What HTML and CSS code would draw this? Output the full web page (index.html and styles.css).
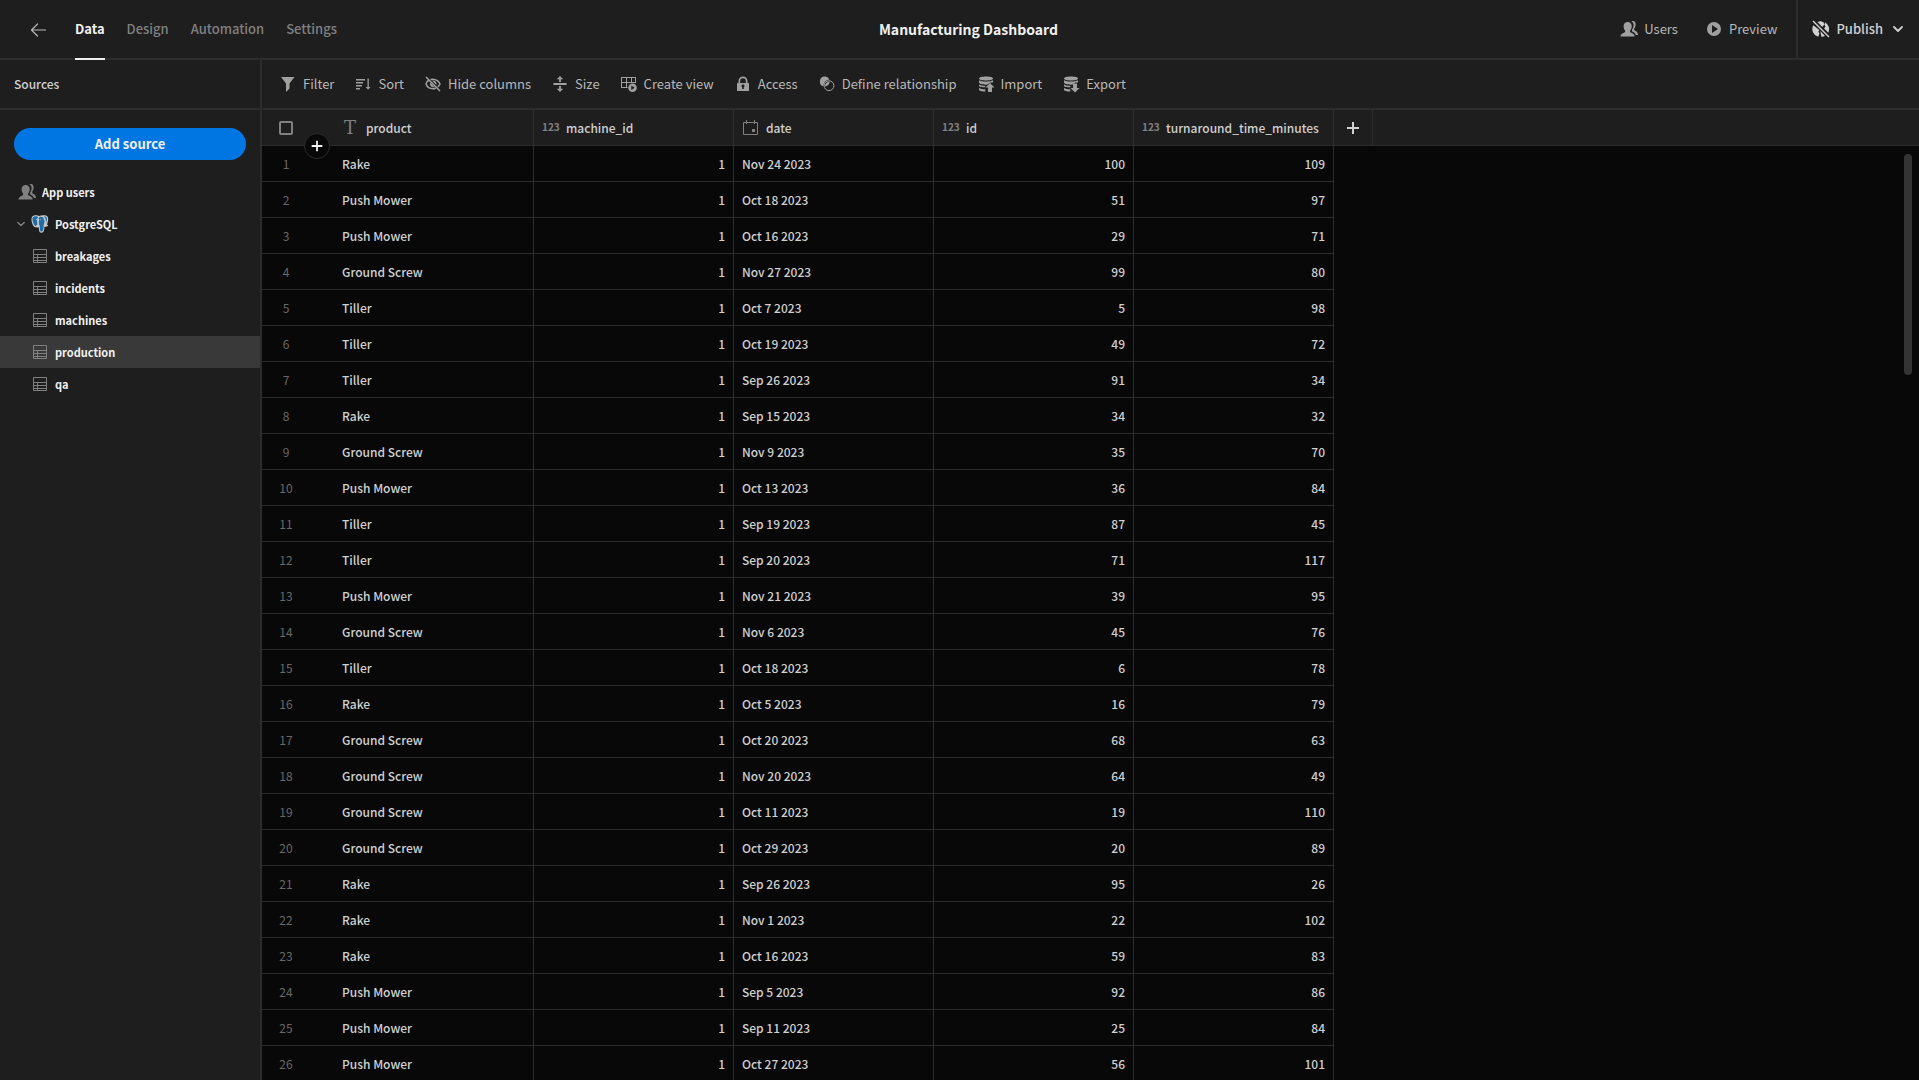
FILE: index.html
```html
<!DOCTYPE html>
<html lang="en">
<head>
<meta charset="utf-8">
<meta name="viewport" content="width=device-width, initial-scale=1">
<title>Manufacturing Dashboard</title>
<link rel="stylesheet" href="styles.css">
</head>
<body>
<svg class="sprite" aria-hidden="true">
  <symbol id="i-users" viewBox="0 0 18 18"><path d="M11.2 1.6c.6-.5 1.200-.7 1.900-.6 1.700.1 2.600 1.500 2.500 3.500 0 1.700-.5 3-1.400 4v1.400c.3.800 3.600 1.400 3.700 4.200v1h-2.100c-.5-2.500-2.800-3.200-3.900-3.800v-1.500c1.200-1.400 1.700-3.200 1.700-5 0-1.300-.9-2.600-2.400-3.200z"/><path d="M7.700 2c2.600 0 4 1.700 4 4.200 0 1.700-.7 3.300-1.600 4.300v1.500c.4.900 4.500 1.200 4.600 4.600H.500c.1-3.400 4.200-3.700 4.600-4.600v-1.500c-.9-1-1.500-2.600-1.500-4.300C3.600 3.700 5.100 2 7.700 2z"/></symbol>
  <symbol id="i-table" viewBox="0 0 18 18"><path fill="none" stroke="currentColor" d="M2.500 2.500h13v13h-13zM2.500 7.500h13M2.500 10.500h13M2.500 13.500h13M6.500 7.500v8"/></symbol>
  <symbol id="i-chevron" viewBox="0 0 10 10"><path fill="none" stroke="currentColor" stroke-width="1.800" stroke-linecap="round" stroke-linejoin="round" d="M1 3l4 4 4-4"/></symbol>
  <symbol id="i-plus" viewBox="0 0 18 18"><path d="M8 3h2v5h5v2h-5v5H8v-5H3V8h5z"/></symbol>
  <symbol id="i-db" viewBox="0 0 18 18"><path d="M9 1.500c4 0 7 .8 7 2s-3 2-7 2-7-.8-7-2 3-2 7-2z"/><path d="M2 5.200c1.500.9 4 1.300 7 1.300s5.500-.4 7-1.300V7.500h-2.500L10.500 9.600 9 9.700c-4 0-7-.9-7-2.100zM2 9.400c1.400.9 3.800 1.300 6.300 1.300v1.600c-3.600-.1-6.300-.3-6.300-1.300z"/><path d="M2 12.900c1.400.8 3.600 1.200 6.300 1.300v2.300C4.700 16.400 2 15.900 2 14.700z"/></symbol>
</svg>
<div class="app">
  <header class="topbar">
    <nav class="tabs">
      <button class="back" aria-label="Back"><svg class="icon" viewBox="0 0 18 18"><path fill="none" stroke="currentColor" stroke-width="1.200" stroke-linecap="round" stroke-linejoin="round" d="M15.500 9H1.500M7.500 3L1.500 9l6 6"/></svg></button>
      <a class="tab active" href="#">Data</a>
      <a class="tab" href="#">Design</a>
      <a class="tab" href="#">Automation</a>
      <a class="tab" href="#">Settings</a>
    </nav>
    <h1 class="title">Manufacturing Dashboard</h1>
    <div class="actions">
      <button class="action"><svg class="icon"><use href="#i-users"/></svg>Users</button>
      <button class="action"><svg class="icon" viewBox="0 0 18 18"><path fill-rule="evenodd" d="M9 2a7 7 0 1 1 0 14A7 7 0 0 1 9 2zM7 5v8l6-4z"/></svg>Preview</button>
      <button class="action publish"><svg class="icon" viewBox="0 0 18 18"><path d="M5.500 1.900A8 8 0 0 1 9 1.200l2.500 1 .8 2.300-2 2.400zM13 2.300a8 8 0 0 1 3.300 10.400l-4.200-4.200 1.400-2-1-1.500zM1.300 5.200a8 8 0 0 0 4.900 11.500l1.200-2.900-1-2.300 1-1.400zM8.200 11l4.800 4.900-3.300 1-.6-1.600z"/><path fill="none" stroke="currentColor" stroke-width="1.500" d="M1 1l16 16"/></svg>Publish<svg class="chevron"><use href="#i-chevron"/></svg></button>
    </div>
  </header>
  <div class="workspace">
    <aside class="sidebar">
      <h2 class="side-title">Sources</h2>
      <button class="add-source">Add source</button>
      <ul class="tree">
        <li><a class="node root" href="#"><svg class="icon"><use href="#i-users"/></svg>App users</a></li>
        <li><a class="node source" href="#"><svg class="chevron"><use href="#i-chevron"/></svg><svg class="icon" viewBox="0 0 18 18"><path fill="#c9c9c9" d="M3 .6C5 0 7 .5 8 1c2-1 5-.9 7-.4 3 1.200 2.500 5 1 8.900l1.200.8c-.8 1.500-2.700 1.700-3.700 1.400-.3 2.500-.2 6-3.200 6-2.500 0-2.300-3.400-2.500-5.500-1 .6-2.200.5-2.800-.2-1.800 1-3.400-1.700-4.200-5C.200 3.800.400 1.400 3 .6z"/><path fill="#1f6da8" d="M3.300 1.500c1.500-.4 3 0 3.800.6-1.300 1.900-1.100 5-.7 7.400-.8.400-1 1.400-1.700 1.500C3.400 11.200 2.200 8.400 1.700 6 1.200 3.700 1.400 2.100 3.300 1.500zM8.300 2.200c1.300-.8 4.200-.4 4.900 2.200.5 2 .3 4-.7 5.800.2 2.800 0 6.300-2.100 6.300-2 0-1.400-3.500-1.700-6.100C6.900 8.600 7 4 8.300 2.200zM12.700 1.500c3.600-.3 4.100 2.200 2.200 6.500.3-2.600 0-4.800-2.200-6.500z"/><path fill="none" stroke="#c9c9c9" stroke-width=".9" d="M5 4.500l2.500-.4v6.400M12.600 4.200h1.600M8.600 4.800h1.200"/></svg>PostgreSQL</a></li>
        <li><a class="node" href="#"><svg class="icon"><use href="#i-table"/></svg>breakages</a></li>
        <li><a class="node" href="#"><svg class="icon"><use href="#i-table"/></svg>incidents</a></li>
        <li><a class="node" href="#"><svg class="icon"><use href="#i-table"/></svg>machines</a></li>
        <li><a class="node selected" href="#"><svg class="icon"><use href="#i-table"/></svg>production</a></li>
        <li><a class="node" href="#"><svg class="icon"><use href="#i-table"/></svg>qa</a></li>
      </ul>
    </aside>
    <main class="main">
      <div class="toolbar">
        <button class="action"><svg class="icon" viewBox="0 0 18 18"><path d="M2 2h13.500l-5 6.500v5L7 17V8.500z"/></svg>Filter</button>
        <button class="action"><svg class="icon" viewBox="0 0 18 18"><path d="M2 4h9v1.500H2zM2 7h7v1.500H2zM2 10h6v1.500H2zM2 13h4v1.500H2zM13.500 3.500h1.300V12h1.700l-2.400 2.800L11.700 12h1.800z"/></svg>Sort</button>
        <button class="action"><svg class="icon" viewBox="0 0 18 18"><path fill="none" stroke="currentColor" stroke-width="1.500" d="M2 2l14 14M5 5C3 6.200 2 8 2 9c1 2.700 4 4.700 7 4.700 1.200 0 2-.2 2.800-.5M6.500 4.500C7.200 4.300 8 4.200 9 4.200c3 0 6.200 2.300 7 4.800-.4 1-1.200 2.200-2.300 3"/><path d="M6 7.600A3.500 3.500 0 0 0 10.600 12zM8 5.600A3.500 3.500 0 0 1 12.400 10z"/></svg>Hide columns</button>
        <button class="action"><svg class="icon" viewBox="0 0 18 18"><path d="M2.500 8h13v2h-13zM9 1l3.200 3.200H9.900V7H8.100V4.200H5.800zM9 17l-3.200-3.200h2.300V11h1.800v2.800h2.300z"/></svg>Size</button>
        <button class="action"><svg class="icon" viewBox="0 0 18 18"><path fill="none" stroke="currentColor" d="M1.500 2.500h14M1.500 7.500h14M1.500 12.500h6M1.500 2v11M6.500 2v11M11.500 2v5.500M15.500 2v6"/><path fill-rule="evenodd" d="M12.500 8.500a4.300 4.300 0 1 1 0 8.600 4.300 4.300 0 0 1 0-8.600zm-1.200 2v4.600l3.400-2.300z"/></svg>Create view</button>
        <button class="action"><svg class="icon" viewBox="0 0 18 18"><path fill-rule="evenodd" d="M3.500 8h1V6a4.500 4.500 0 0 1 9 0v2h1c.4 0 .5.200.5.500v7c0 .4-.1.500-.5.500h-11c-.4 0-.5-.1-.5-.5v-7c0-.3.100-.5.500-.5zm2.700 0h5.600V6a2.800 2.800 0 0 0-5.600 0zM9 9.500a1.500 1.500 0 0 0-.8 2.800V14h1.600v-1.700A1.500 1.500 0 0 0 9 9.500z"/></svg>Access</button>
        <button class="action"><svg class="icon" viewBox="0 0 18 18"><path d="M6.700 1.500a5 5 0 0 1 4.600 3.100A6.400 6.400 0 0 0 5.500 11.300 5 5 0 0 1 6.700 1.500z"/><path d="M11.700 6.600a5 5 0 0 1-4.900 4.900 5 5 0 0 1 4.900-4.900z"/><circle cx="11" cy="10.700" r="4.900" fill="none" stroke="currentColor" stroke-width="1"/></svg>Define relationship</button>
        <button class="action"><svg class="icon" viewBox="0 0 18 18"><use href="#i-db"/><path d="M13 8l4.500 4.500H15V17h-4v-4.500H8.500z"/></svg>Import</button>
        <button class="action"><svg class="icon" viewBox="0 0 18 18"><use href="#i-db"/><path d="M11 8.500h4V13h2.500L13 17.500 8.500 13H11z"/></svg>Export</button>
      </div>
      <div class="grid">
        <table>
          <colgroup><col class="c-num"><col class="c-data"><col class="c-data"><col class="c-data"><col class="c-data"><col class="c-data"><col class="c-add"><col></colgroup>
          <thead>
            <tr>
              <th class="num"><input type="checkbox" aria-label="Select all rows"></th>
              <th><span class="head"><span class="type letter">T</span>product</span></th>
              <th><span class="head"><span class="type digits">123</span>machine_id</span></th>
              <th><span class="head"><svg class="icon" viewBox="0 0 18 18"><path fill="none" stroke="currentColor" d="M1.500 3.500h14v12h-14z"/><path d="M4 1h1v4H4zM12 1h1v4h-1zM10 10h3v3h-3z"/></svg>date</span></th>
              <th><span class="head"><span class="type digits">123</span>id</span></th>
              <th><span class="head"><span class="type digits">123</span>turnaround_time_minutes</span></th>
              <th class="add"><button class="add-column" aria-label="Add column"><svg class="icon"><use href="#i-plus"/></svg></button></th>
              <th class="rest"></th>
            </tr>
          </thead>
          <tbody>
            <tr><td>1</td><td>Rake</td><td>1</td><td>Nov 24 2023</td><td>100</td><td>109</td></tr>
            <tr><td>2</td><td>Push Mower</td><td>1</td><td>Oct 18 2023</td><td>51</td><td>97</td></tr>
            <tr><td>3</td><td>Push Mower</td><td>1</td><td>Oct 16 2023</td><td>29</td><td>71</td></tr>
            <tr><td>4</td><td>Ground Screw</td><td>1</td><td>Nov 27 2023</td><td>99</td><td>80</td></tr>
            <tr><td>5</td><td>Tiller</td><td>1</td><td>Oct 7 2023</td><td>5</td><td>98</td></tr>
            <tr><td>6</td><td>Tiller</td><td>1</td><td>Oct 19 2023</td><td>49</td><td>72</td></tr>
            <tr><td>7</td><td>Tiller</td><td>1</td><td>Sep 26 2023</td><td>91</td><td>34</td></tr>
            <tr><td>8</td><td>Rake</td><td>1</td><td>Sep 15 2023</td><td>34</td><td>32</td></tr>
            <tr><td>9</td><td>Ground Screw</td><td>1</td><td>Nov 9 2023</td><td>35</td><td>70</td></tr>
            <tr><td>10</td><td>Push Mower</td><td>1</td><td>Oct 13 2023</td><td>36</td><td>84</td></tr>
            <tr><td>11</td><td>Tiller</td><td>1</td><td>Sep 19 2023</td><td>87</td><td>45</td></tr>
            <tr><td>12</td><td>Tiller</td><td>1</td><td>Sep 20 2023</td><td>71</td><td>117</td></tr>
            <tr><td>13</td><td>Push Mower</td><td>1</td><td>Nov 21 2023</td><td>39</td><td>95</td></tr>
            <tr><td>14</td><td>Ground Screw</td><td>1</td><td>Nov 6 2023</td><td>45</td><td>76</td></tr>
            <tr><td>15</td><td>Tiller</td><td>1</td><td>Oct 18 2023</td><td>6</td><td>78</td></tr>
            <tr><td>16</td><td>Rake</td><td>1</td><td>Oct 5 2023</td><td>16</td><td>79</td></tr>
            <tr><td>17</td><td>Ground Screw</td><td>1</td><td>Oct 20 2023</td><td>68</td><td>63</td></tr>
            <tr><td>18</td><td>Ground Screw</td><td>1</td><td>Nov 20 2023</td><td>64</td><td>49</td></tr>
            <tr><td>19</td><td>Ground Screw</td><td>1</td><td>Oct 11 2023</td><td>19</td><td>110</td></tr>
            <tr><td>20</td><td>Ground Screw</td><td>1</td><td>Oct 29 2023</td><td>20</td><td>89</td></tr>
            <tr><td>21</td><td>Rake</td><td>1</td><td>Sep 26 2023</td><td>95</td><td>26</td></tr>
            <tr><td>22</td><td>Rake</td><td>1</td><td>Nov 1 2023</td><td>22</td><td>102</td></tr>
            <tr><td>23</td><td>Rake</td><td>1</td><td>Oct 16 2023</td><td>59</td><td>83</td></tr>
            <tr><td>24</td><td>Push Mower</td><td>1</td><td>Sep 5 2023</td><td>92</td><td>86</td></tr>
            <tr><td>25</td><td>Push Mower</td><td>1</td><td>Sep 11 2023</td><td>25</td><td>84</td></tr>
            <tr><td>26</td><td>Push Mower</td><td>1</td><td>Oct 27 2023</td><td>56</td><td>101</td></tr>
          </tbody>
        </table>
        <button class="add-row" aria-label="Add row"><svg class="icon"><use href="#i-plus"/></svg></button>
        <div class="scroll-thumb"></div>
      </div>
    </main>
  </div>
</div>
</body>
</html>
```
FILE: styles.css
```css
:root {
  --bg: #1e1e1e;
  --grid-bg: #080808;
  --line: #2c2c2c;
  --selected: #393939;
  --muted: #808080;
  --text: #b8b8b8;
  --bright: #d0d0d0;
  --white: #f0f0f0;
}

* { box-sizing: border-box; }

body {
  margin: 0;
  background: var(--bg);
  color: var(--text);
  font: 400 13px/20px "Noto Sans CJK SC", "Noto Sans", sans-serif;
}

button {
  padding: 0;
  border: 0;
  background: none;
  color: inherit;
  font: inherit;
  cursor: pointer;
}

a { color: inherit; text-decoration: none; }
h1, h2 { margin: 0; font-size: inherit; }

.sprite { position: absolute; width: 0; height: 0; }
.icon { flex: none; display: block; width: 18px; height: 18px; fill: currentColor; }
.chevron { flex: none; width: 10px; height: 10px; }

.app { display: flex; flex-direction: column; height: 100vh; overflow: hidden; }

/* Top bar */
.topbar {
  display: grid;
  grid-template-columns: 1fr auto 1fr;
  flex: none;
  height: 60px;
  padding-left: 18px;
  border-bottom: 2px solid var(--line);
}

.tabs { display: flex; gap: 22px; padding-left: 12px; margin-bottom: -2px; }
.back { display: flex; align-items: center; margin-right: 5px; color: var(--text); }
.tab {
  display: flex;
  align-items: center;
  border-bottom: 2px solid transparent;
  color: var(--muted);
  font-weight: 500;
}
.tab.active { border-color: var(--white); color: var(--white); font-weight: 700; }
.title { align-self: center; color: var(--white); font-size: 14px; font-weight: 700; }

.actions { display: flex; justify-content: flex-end; gap: 27px; }
.action { display: flex; align-items: center; gap: 6px; white-space: nowrap; }
.action .icon { color: #a0a0a0; }
.publish {
  margin-left: -8px;
  padding: 0 16px 0 14px;
  border-left: 2px solid var(--line);
  color: var(--bright);
  font-weight: 500;
}
.publish .icon { color: var(--bright); }
.publish .chevron { margin-left: 4px; }

/* Sources */
.workspace { display: flex; flex: 1; min-height: 0; }
.sidebar { flex: none; width: 262px; border-right: 2px solid var(--line); }
.side-title {
  height: 50px;
  padding: 0 14px;
  border-bottom: 2px solid var(--line);
  color: var(--bright);
  font-size: 12px;
  font-weight: 500;
  line-height: 48px;
}
.add-source {
  display: block;
  width: 232px;
  height: 32px;
  margin: 18px 14px 16px;
  padding-bottom: 1px;
  border-radius: 16px;
  background: #0076e2;
  color: var(--white);
  font-weight: 700;
}
.tree { margin: 0; padding: 0; list-style: none; }
.node {
  display: flex;
  align-items: center;
  gap: 6px;
  height: 32px;
  padding-left: 31px;
  color: var(--white);
  font-size: 11px;
  font-weight: 700;
}
.node .icon, .node .chevron { color: var(--muted); }
.node .chevron { width: 8px; height: 8px; }
.node.root { padding-left: 18px; }
.node.source { padding-left: 17px; }
.node.selected { background: var(--selected); }

/* Table view */
.main { display: flex; flex: 1; flex-direction: column; min-width: 0; }
.toolbar {
  display: flex;
  flex: none;
  gap: 20px;
  height: 50px;
  padding: 0 17px;
  border-bottom: 2px solid var(--line);
}

.grid { position: relative; flex: 1; min-height: 0; overflow: hidden; background: var(--grid-bg); }
table { width: 100%; table-layout: fixed; border-collapse: separate; border-spacing: 0; }
.c-num { width: 72px; }
.c-data { width: 200px; }
.c-add { width: 39px; }

th, td {
  height: 36px;
  padding: 1px 8px 0;
  border-right: 1px solid var(--line);
  border-bottom: 1px solid var(--line);
  color: var(--bright);
  font-size: 12px;
  font-weight: 500;
  text-align: left;
  white-space: nowrap;
}
th { background: var(--bg); }
.head { display: flex; align-items: center; gap: 6px; }
.head .icon, .type { color: var(--muted); }
.type { width: 18px; }
.digits { font-size: 10px; font-weight: 700; line-height: 16px; padding-bottom: 2px; }
.letter { font: 18px/20px "DejaVu Serif", serif; padding-left: 2px; }
th.rest { border-right: 0; }
th.add { padding: 0 10px; }
.add-column { display: block; color: var(--bright); }

th.num, td:first-child { padding: 0 24px 0 0; border-right: 0; text-align: center; }
td:first-child { color: #686868; font-weight: 400; }
td:nth-child(3), td:nth-child(5), td:nth-child(6) { text-align: right; }

input[type="checkbox"] {
  display: block;
  width: 14px;
  height: 14px;
  margin: 0 auto;
  border: 2px solid var(--muted);
  border-radius: 2px;
  appearance: none;
}

.add-row {
  position: absolute;
  top: 23px;
  left: 42px;
  display: flex;
  align-items: center;
  justify-content: center;
  width: 26px;
  height: 26px;
  border: 1px solid var(--line);
  border-radius: 50%;
  background: var(--grid-bg);
  color: var(--white);
}
.add-row .icon { width: 16px; height: 16px; }

.scroll-thumb {
  position: absolute;
  top: 44px;
  right: 7px;
  width: 8px;
  height: 221px;
  border-radius: 4px;
  background: #343434;
}
```
